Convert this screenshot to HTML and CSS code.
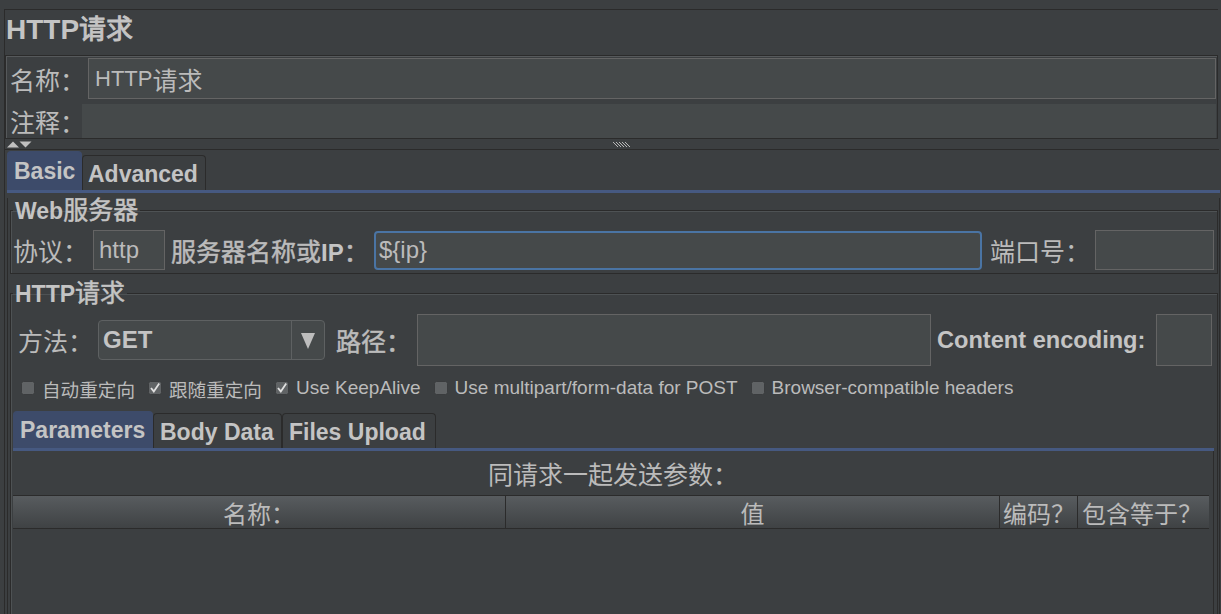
FILE: index.html
```html
<!DOCTYPE html>
<html lang="zh-CN">
<head>
<meta charset="utf-8">
<title>HTTP请求</title>
<link rel="stylesheet" href="styles.css">
</head>
<body>
<div class="root">
  <div class="title">HTTP<span class="zh-title">请求</span></div>
  <div class="namebox">
    <div class="name-row">
      <span class="lbl lbl-name">名称：</span>
      <div class="field name-field">HTTP<span class="zh">请求</span></div>
    </div>
    <div class="comment-row">
      <span class="lbl lbl-comment">注释：</span>
      <div class="comment-field"></div>
    </div>
  </div>
  <div class="splitter">
    <svg class="split-arrows" width="25" height="7" viewBox="0 0 25 7"><polygon points="0,6.5 6,0.5 12,6.5"/><polygon points="12.5,0.5 24.5,0.5 18.5,6.5"/></svg>
    <svg class="grip" width="18" height="5" viewBox="0 0 18 5">
      <g fill="#b8b8b8">
        <rect x="0" y="0" width="1" height="1"/><rect x="1" y="1" width="1" height="1"/><rect x="2" y="2" width="1" height="1"/><rect x="3" y="3" width="1" height="1"/><rect x="4" y="4" width="1" height="1"/>
        <rect x="3" y="0" width="1" height="1"/><rect x="4" y="1" width="1" height="1"/><rect x="5" y="2" width="1" height="1"/><rect x="6" y="3" width="1" height="1"/><rect x="7" y="4" width="1" height="1"/>
        <rect x="6" y="0" width="1" height="1"/><rect x="7" y="1" width="1" height="1"/><rect x="8" y="2" width="1" height="1"/><rect x="9" y="3" width="1" height="1"/><rect x="10" y="4" width="1" height="1"/>
        <rect x="9" y="0" width="1" height="1"/><rect x="10" y="1" width="1" height="1"/><rect x="11" y="2" width="1" height="1"/><rect x="12" y="3" width="1" height="1"/><rect x="13" y="4" width="1" height="1"/>
        <rect x="12" y="0" width="1" height="1"/><rect x="13" y="1" width="1" height="1"/><rect x="14" y="2" width="1" height="1"/><rect x="15" y="3" width="1" height="1"/><rect x="16" y="4" width="1" height="1"/>
      </g>
    </svg>
  </div>
  <div class="tabs main-tabs">
    <div class="tab selected tab-basic">Basic</div>
    <div class="tab tab-adv">Advanced</div>
  </div>
  <div class="tab-body">
    <fieldset class="group web-group">
      <legend>Web<span class="zh-bold">服务器</span></legend>
      <div class="form-row web-row">
        <span class="lbl w-proto">协议：</span>
        <div class="field proto-field">http</div>
        <span class="lbl w-server"><span class="zh-bold">服务器名称或</span><b class="latin-bold">IP</b><span class="zh-bold">：</span></span>
        <div class="field server-field">${ip}</div>
        <span class="lbl w-port">端口号：</span>
        <div class="field port-field"></div>
      </div>
    </fieldset>
    <fieldset class="group http-group">
      <legend>HTTP<span class="zh-bold">请求</span></legend>
      <div class="form-row method-row">
        <span class="lbl w-method">方法：</span>
        <div class="combo">
          <span class="combo-value">GET</span>
          <span class="combo-btn"><svg width="14" height="16" viewBox="0 0 14 16"><polygon points="0,0 14,0 7,16" fill="#bdbdbd"/></svg></span>
        </div>
        <span class="lbl w-path"><span class="zh-bold">路径：</span></span>
        <div class="field path-field"></div>
        <span class="lbl w-enc latin-bold enc-label">Content encoding:</span>
        <div class="field enc-field"></div>
      </div>
      <div class="check-row">
        <span class="check"><svg class="cb" width="14" height="14" viewBox="0 0 14 14"><rect x="0.5" y="0.5" width="13" height="13" rx="2" fill="#606365" stroke="#3a3c3e"/></svg><span class="zh-check">自动重定向</span></span>
        <span class="check"><svg class="cb" width="14" height="14" viewBox="0 0 14 14"><rect x="0.5" y="0.5" width="13" height="13" rx="2" fill="#606365" stroke="#3a3c3e"/><path d="M3 7 L5.8 10.4 L11.2 2.6" fill="none" stroke="#e0e0e0" stroke-width="1.8"/></svg><span class="zh-check">跟随重定向</span></span>
        <span class="check"><svg class="cb" width="14" height="14" viewBox="0 0 14 14"><rect x="0.5" y="0.5" width="13" height="13" rx="2" fill="#606365" stroke="#3a3c3e"/><path d="M3 7 L5.8 10.4 L11.2 2.6" fill="none" stroke="#e0e0e0" stroke-width="1.8"/></svg>Use KeepAlive</span>
        <span class="check"><svg class="cb" width="14" height="14" viewBox="0 0 14 14"><rect x="0.5" y="0.5" width="13" height="13" rx="2" fill="#606365" stroke="#3a3c3e"/></svg>Use multipart/form-data for POST</span>
        <span class="check"><svg class="cb" width="14" height="14" viewBox="0 0 14 14"><rect x="0.5" y="0.5" width="13" height="13" rx="2" fill="#606365" stroke="#3a3c3e"/></svg>Browser-compatible headers</span>
      </div>
      <div class="tabs sub-tabs">
        <div class="tab selected tab-params">Parameters</div>
        <div class="tab tab-body-data">Body Data</div>
        <div class="tab tab-files">Files Upload</div>
      </div>
      <div class="params">
        <div class="params-caption">同请求一起发送参数：</div>
        <div class="table-head">
          <div class="th th-name">名称：</div>
          <div class="th th-value">值</div>
          <div class="th th-enc">编码？</div>
          <div class="th th-inc">包含等于？</div>
        </div>
        <div class="table-body"></div>
      </div>
    </fieldset>
  </div>
</div>
</body>
</html>
```

FILE: styles.css
```css
* { box-sizing: border-box; }

html, body {
  margin: 0;
  height: 614px;
  overflow: hidden;
}

body {
  background: #3c3f41;
  color: #bbbbbb;
  font-family: "Liberation Sans", "Noto Sans CJK SC", sans-serif;
  font-size: 22px;
  padding-top: 9px;
}

.root {
  margin-left: 4px;
  border-left: 1px solid #2b2b2b;
  height: 610px;
}

.title {
  border-top: 1px solid #2b2b2b;
  margin-right: 3px;
  font-size: 28px;
  font-weight: bold;
  line-height: 40px;
  height: 46px;
  padding-left: 1px;
  color: #c4c4c4;
}

.zh-title {
  font-size: 27px;
  font-weight: normal;
  -webkit-text-stroke: 0.9px #c4c4c4;
}

.zh {
  font-size: 25px;
}

.zh-bold {
  font-size: 25px;
  font-weight: normal;
  -webkit-text-stroke: 0.5px currentColor;
}

.latin-bold {
  font-weight: bold;
  font-size: 24px;
  color: #c4c4c4;
}

.namebox {
  margin-right: 3px;
  height: 84px;
  border: 1px solid #2b2b2b;
  box-shadow: inset 1px 1px 0 #56595b;
  padding: 2px 1px 0 0;
}

.lbl {
  flex: none;
  white-space: nowrap;
  font-size: 25px;
}

.name-row {
  display: flex;
  align-items: center;
  height: 41px;
}

.lbl-name {
  width: 82px;
  padding-left: 4px;
}

.field {
  background: #45494a;
  border: 1px solid #646464;
  display: flex;
  align-items: center;
  color: #bbbbbb;
  white-space: nowrap;
}

.name-field {
  flex: 1;
  height: 41px;
  padding-left: 6px;
  font-size: 22px;
}

.comment-row {
  display: flex;
  align-items: center;
  height: 34px;
  margin-top: 5px;
}

.lbl-comment {
  width: 76px;
  padding-left: 4px;
}

.comment-field {
  flex: 1;
  height: 34px;
  background: #45494a;
}

.splitter {
  display: flex;
  align-items: flex-start;
  height: 11px;
  margin-right: 2px;
  border-bottom: 1px solid #2b2b2b;
  padding-top: 2px;
}

.split-arrows {
  margin-left: 2px;
  fill: #c0c0c0;
}

.grip {
  margin-left: 581px;
  margin-top: 1px;
}

.tabs {
  display: flex;
  align-items: flex-end;
  border-bottom: 3px solid #465981;
}

.tab {
  font-weight: bold;
  font-size: 23px;
  white-space: nowrap;
  border: 1px solid #2b2b2b;
  border-bottom: none;
  border-radius: 4px 4px 0 0;
  display: flex;
  align-items: center;
  color: #c4c4c4;
}

.tab.selected {
  background: #3d4b6a;
  border-color: #3d4b6a;
}

.main-tabs {
  height: 43px;
  margin-left: 2px;
  margin-right: 1px;
}

.tab-basic {
  width: 75px;
  height: 39px;
  padding-left: 6px;
}

.tab-adv {
  width: 124px;
  height: 35px;
  padding-left: 5px;
  padding-top: 2px;
}

.tab-body {
  margin-left: 2px;
  margin-right: 1px;
  border-left: 1px solid #2b2b2b;
  border-right: 1px solid #2b2b2b;
  height: 430px;
}

.group {
  margin: 5px 1px 0 2px;
  padding: 0;
  min-inline-size: 0;
  border: 1px solid #2b2b2b;
  box-shadow: inset 1px 1px 0 #4e5254;
}

.group legend {
  font-size: 23px;
  font-weight: bold;
  line-height: 24px;
  height: 24px;
  padding: 0 2px;
  margin-left: 2px;
  color: #c4c4c4;
  white-space: nowrap;
}

.group legend .zh-bold {
  line-height: 24px;
}

.http-group {
  margin-top: 7px;
  height: 360px;
}

.form-row {
  display: flex;
  align-items: center;
}

.web-row {
  height: 40px;
  margin-top: 8px;
  margin-bottom: 3px;
  padding: 0 3px 0 2px;
}

.w-proto { width: 80px; }

.proto-field {
  width: 72px;
  height: 40px;
  padding-left: 5px;
  font-size: 24px;
}

.w-server { width: 203px; margin-left: 6px; }

.server-field {
  flex: 1;
  height: 39px;
  border: 2px solid #4a74a4;
  border-radius: 4px;
  padding-left: 3px;
  font-size: 24px;
}

.w-port { width: 105px; margin-left: 8px; }

.port-field {
  width: 119px;
  height: 40px;
}

.method-row {
  height: 52px;
  margin-top: 9px;
  padding: 0 5px 0 7px;
}

.w-method { width: 80px; }

.combo {
  flex: none;
  width: 227px;
  height: 40px;
  display: flex;
  background: #45494a;
  border: 1px solid #5e6162;
  border-radius: 4px;
}

.combo-value {
  flex: 1;
  display: flex;
  align-items: center;
  padding-left: 4px;
  font-weight: bold;
  font-size: 24px;
  color: #c4c4c4;
}

.combo-btn {
  width: 33px;
  border-left: 1px solid #5e6162;
  display: flex;
  align-items: center;
  justify-content: center;
  padding-top: 2px;
}

.w-path { width: 81px; margin-left: 11px; }

.path-field {
  flex: 1;
  height: 52px;
}

.w-enc { width: 219px; margin-left: 6px; }

.enc-label { font-size: 23.6px; }

.enc-field {
  width: 56px;
  height: 52px;
}

.check-row {
  display: flex;
  align-items: center;
  height: 22px;
  margin: 11px 0 12px;
  padding-left: 10px;
  font-size: 19px;
  white-space: nowrap;
}

.zh-check {
  font-size: 18.6px;
}

.check {
  display: flex;
  align-items: center;
  margin-right: 13px;
}

.cb {
  margin-right: 7px;
  flex: none;
}

.sub-tabs {
  height: 40px;
  margin: 0 3px 0 2px;
}

.tab-params {
  width: 140px;
  height: 37px;
  padding-left: 6px;
}

.tab-body-data {
  width: 129px;
  height: 35px;
  padding-left: 6px;
  padding-top: 2px;
}

.tab-files {
  width: 154px;
  height: 35px;
  padding-left: 6px;
  padding-top: 2px;
}

.params {
  margin: 0 3px 0 2px;
  border-right: 1px solid #2b2b2b;
}

.params-caption {
  height: 44px;
  display: flex;
  align-items: center;
  justify-content: center;
  font-size: 25px;
}

.table-head {
  display: flex;
  height: 34px;
  margin-right: 4px;
  border-top: 1px solid #2b2b2b;
  border-bottom: 1px solid #2b2b2b;
  background: linear-gradient(#585c5f, #3f4244);
}

.th {
  flex: none;
  display: flex;
  align-items: center;
  font-size: 24px;
  white-space: nowrap;
  overflow: hidden;
  border-right: 1px solid #2b2b2b;
}

.th-name { width: 493px; justify-content: center; }
.th-value { width: 494px; justify-content: center; }
.th-enc { width: 78px; padding-left: 3px; }
.th-inc { flex: 1; padding-left: 4px; border-right: none; }

.table-body {
  height: 120px;
}
```
